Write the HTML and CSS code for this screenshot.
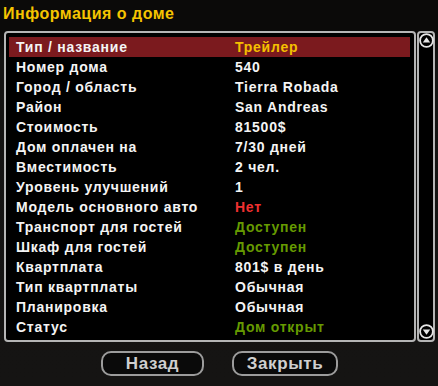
FILE: index.html
```html
<!DOCTYPE html>
<html lang="ru">
<head>
<meta charset="utf-8">
<link rel="stylesheet" href="styles.css">
</head>
<body>
<div class="dialog">
  <div class="title">Информация о доме</div>
  <div class="body">
    <div class="list">
      <div class="row sel"><span class="k">Тип / название</span><span class="v yellow">Трейлер</span></div>
      <div class="row"><span class="k">Номер дома</span><span class="v">540</span></div>
      <div class="row"><span class="k">Город / область</span><span class="v">Tierra Robada</span></div>
      <div class="row"><span class="k">Район</span><span class="v">San Andreas</span></div>
      <div class="row"><span class="k">Стоимость</span><span class="v">81500$</span></div>
      <div class="row"><span class="k">Дом оплачен на</span><span class="v">7/30 дней</span></div>
      <div class="row"><span class="k">Вместимость</span><span class="v">2 чел.</span></div>
      <div class="row"><span class="k">Уровень улучшений</span><span class="v">1</span></div>
      <div class="row"><span class="k">Модель основного авто</span><span class="v red">Нет</span></div>
      <div class="row"><span class="k">Транспорт для гостей</span><span class="v green">Доступен</span></div>
      <div class="row"><span class="k">Шкаф для гостей</span><span class="v green">Доступен</span></div>
      <div class="row"><span class="k">Квартплата</span><span class="v">801$ в день</span></div>
      <div class="row"><span class="k">Тип квартплаты</span><span class="v">Обычная</span></div>
      <div class="row"><span class="k">Планировка</span><span class="v">Обычная</span></div>
      <div class="row"><span class="k">Статус</span><span class="v green">Дом открыт</span></div>
    </div>
    <div class="scroll">
      <svg class="arrow" viewBox="0 0 15 15" width="15" height="15"><circle cx="7.5" cy="7.5" r="6.4" fill="#000" stroke="#e6e6e6" stroke-width="1.8"/><path d="M3.8 9.4 L7.5 4.2 L11.2 9.4 Z" fill="#e6e6e6"/></svg>
      <svg class="arrow" viewBox="0 0 15 15" width="15" height="15"><circle cx="7.5" cy="7.5" r="6.4" fill="#000" stroke="#e6e6e6" stroke-width="1.8"/><path d="M3.8 5.6 L7.5 10.8 L11.2 5.6 Z" fill="#e6e6e6"/></svg>
    </div>
  </div>
  <div class="buttons">
    <div class="btn back">Назад</div>
    <div class="btn close">Закрыть</div>
  </div>
</div>
</body>
</html>
```
FILE: styles.css
```css
html, body {
  margin: 0;
  padding: 0;
}
body {
  width: 438px;
  height: 386px;
  background: #141312;
  font-family: "Liberation Sans", Arial, sans-serif;
  font-weight: bold;
  overflow: hidden;
}
.dialog {
  width: 438px;
  height: 386px;
  background: linear-gradient(to bottom, #0b0a09 0px, #0b0a09 30px, #141312 60px, #151413 100%);
}
.title {
  height: 31px;
  padding-left: 3px;
  box-sizing: border-box;
  padding-top: 4px;
  font-size: 16px;
  line-height: 20px;
  color: #f5c400;
  letter-spacing: 0.5px;
}
.body {
  display: flex;
  padding-left: 4px;
  gap: 1px;
}
.list {
  width: 412px;
  height: 311px;
  box-sizing: border-box;
  border: 2px solid #b5b5b5;
  border-radius: 4px;
  background: #000;
  padding: 4px 0 0 3px;
}
.row {
  display: grid;
  grid-template-columns: 219px 1fr;
  width: 401px;
  height: 20px;
  padding-left: 7px;
  box-sizing: border-box;
  font-size: 14px;
  line-height: 20px;
  color: #f4f4f4;
  letter-spacing: 0.75px;
  white-space: nowrap;
}
.row.sel {
  background: #7b1a1e;
}
.yellow { color: #f5c000; }
.red { color: #f03030; }
.green { color: #669a00; }
.scroll {
  width: 18px;
  height: 311px;
  box-sizing: border-box;
  border: 2px solid #b5b5b5;
  border-radius: 4px;
  background: #000;
  display: flex;
  flex-direction: column;
  justify-content: space-between;
  align-items: center;
  padding: 0 0 1px;
}
.arrow {
  display: block;
}
.buttons {
  display: flex;
  justify-content: center;
  gap: 28px;
  padding-top: 9px;
  padding-left: 1px;
}
.btn {
  height: 25px;
  box-sizing: border-box;
  border: 2px solid #9c9c9c;
  border-radius: 10px;
  background: #0a0a0a;
  color: #cfcfcf;
  font-size: 17px;
  line-height: 21px;
  text-align: center;
  letter-spacing: 0.6px;
}
.back { width: 103px; }
.close { width: 106px; }
```
